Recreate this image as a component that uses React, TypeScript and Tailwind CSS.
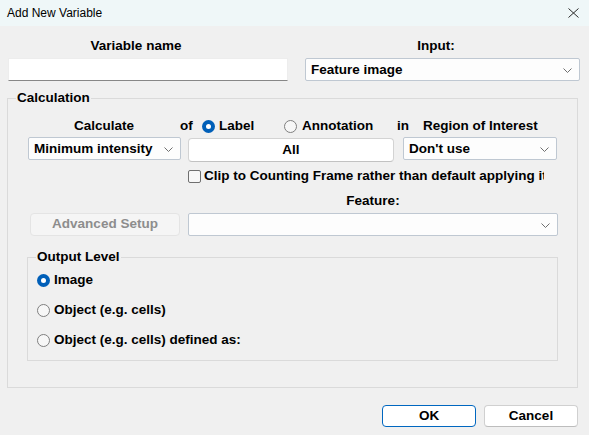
import React from 'react'

const FONT = { fontFamily: '"Liberation Sans", Arial, sans-serif' }

// Small chevron used by the combo boxes
function Chevron() {
  return (
    <svg width="9" height="5" viewBox="0 0 9 5" className="shrink-0">
      <path d="M0.5 0.5 L4.5 4.5 L8.5 0.5" fill="none" stroke="#6f6f6f" strokeWidth="1" />
    </svg>
  )
}

function Combo({ value, className }: { value?: string; className: string }) {
  return (
    <div className={`flex items-center justify-between h-[23px] pl-[5px] pr-[7px] pt-[1px] bg-[#fdfdfd] border border-[#bfc8d2] rounded-[2px] ${className}`}>
      <span className="truncate">{value ?? ''}</span>
      <Chevron />
    </div>
  )
}

function Radio({ checked }: { checked?: boolean }) {
  if (checked) {
    return (
      <span className="flex items-center justify-center w-[13px] h-[13px] rounded-full bg-[#005fb8] shrink-0">
        <span className="w-[5px] h-[5px] rounded-full bg-white" />
      </span>
    )
  }
  return <span className="w-[13px] h-[13px] rounded-full border border-[#7f7f7f] bg-[#f7f7f7] shrink-0" />
}

function GroupBox({ title, className, children }: { title: string; className: string; children: React.ReactNode }) {
  return (
    <div className={`relative border border-[#dadada] ${className}`}>
      <span className="absolute left-[8px] top-[-9px] px-[1px] bg-[#f0f0f0] leading-4">{title}</span>
      {children}
    </div>
  )
}

export default function App() {
  return (
    <div className="w-[589px] h-[435px] bg-[#f0f0f0] text-black overflow-hidden flex flex-col text-[13.5px] font-bold" style={FONT}>
      {/* Title bar */}
      <div className="h-[26px] shrink-0 bg-[#eff7f8] flex items-center justify-between pl-[7px] pr-[10px] font-normal text-[12px]">
        <span>Add New Variable</span>
        <svg width="11" height="10" viewBox="0 0 11 10">
          <path d="M0.5 0.5 L10.5 9.5 M10.5 0.5 L0.5 9.5" stroke="#2b2b2b" strokeWidth="1" fill="none" />
        </svg>
      </div>

      {/* Name / input row */}
      <div className="flex mt-[12px] leading-4">
        <span className="ml-[8px] w-[256px] text-center">Variable name</span>
        <span className="ml-[41px] w-[262px] text-center">Input:</span>
      </div>
      <div className="flex mt-[4px]">
        <div className="ml-[8px] w-[280px] h-[23px] bg-white border border-[#ededed] border-b-[#878787]" />
        <Combo value="Feature image" className="ml-[17px] w-[275px]" />
      </div>

      {/* Calculation group */}
      <GroupBox title="Calculation" className="ml-[7px] mt-[17px] w-[571px] h-[290px]">
        <div className="flex items-center mt-[19px] leading-4">
          <span className="ml-[20px] w-[152px] text-center">Calculate</span>
          <span className="w-[22px]">of</span>
          <Radio checked />
          <span className="ml-[4px] w-[65px]">Label</span>
          <Radio />
          <span className="ml-[5px] w-[95px]">Annotation</span>
          <span className="w-[26px]">in</span>
          <span>Region of Interest</span>
        </div>

        <div className="flex items-start mt-[3px]">
          <Combo value="Minimum intensity" className="ml-[20px] w-[153px]" />
          <button className="ml-[7px] mt-[1px] w-[206px] h-[24px] bg-white border border-[#d3d3d3] border-b-[#c2c2c2] rounded-[4px] font-bold">
            All
          </button>
          <Combo value="Don't use" className="ml-[9px] w-[154px]" />
        </div>

        <div className="flex items-center mt-[6px] ml-[180px] w-[356px] overflow-hidden whitespace-nowrap leading-4">
          <span className="w-[13px] h-[13px] rounded-[2px] border border-[#6f6f6f] bg-[#f7f7f7] shrink-0" />
          <span className="ml-[3px]">Clip to Counting Frame rather than default applying it</span>
        </div>

        <div className="flex mt-[9px] leading-4">
          <span className="ml-[180px] w-[370px] text-center">Feature:</span>
        </div>

        <div className="flex mt-[4px]">
          <button disabled className="ml-[22px] w-[150px] h-[23px] bg-[#f5f5f5] border border-[#e4e4e4] rounded-[4px] text-[#8d8d8d] font-bold">
            Advanced Setup
          </button>
          <Combo className="ml-[8px] w-[370px]" />
        </div>

        <GroupBox title="Output Level" className="ml-[19px] mt-[21px] w-[531px] h-[104px]">
          <div className="flex flex-col gap-[14px] mt-[14px] ml-[9px] leading-4">
            <div className="flex items-center">
              <Radio checked />
              <span className="ml-[4px]">Image</span>
            </div>
            <div className="flex items-center">
              <Radio />
              <span className="ml-[4px]">Object (e.g. cells)</span>
            </div>
            <div className="flex items-center">
              <Radio />
              <span className="ml-[4px]">Object (e.g. cells) defined as:</span>
            </div>
          </div>
        </GroupBox>
      </GroupBox>

      {/* Buttons */}
      <div className="flex justify-end gap-[8px] mt-[17px] pr-[11px]">
        <button className="w-[94px] h-[22px] bg-white border border-[#0067c0] rounded-[4px] font-bold">OK</button>
        <button className="w-[94px] h-[22px] bg-white border border-[#d0d0d0] border-b-[#bdbdbd] rounded-[4px] font-bold">Cancel</button>
      </div>
    </div>
  )
}
